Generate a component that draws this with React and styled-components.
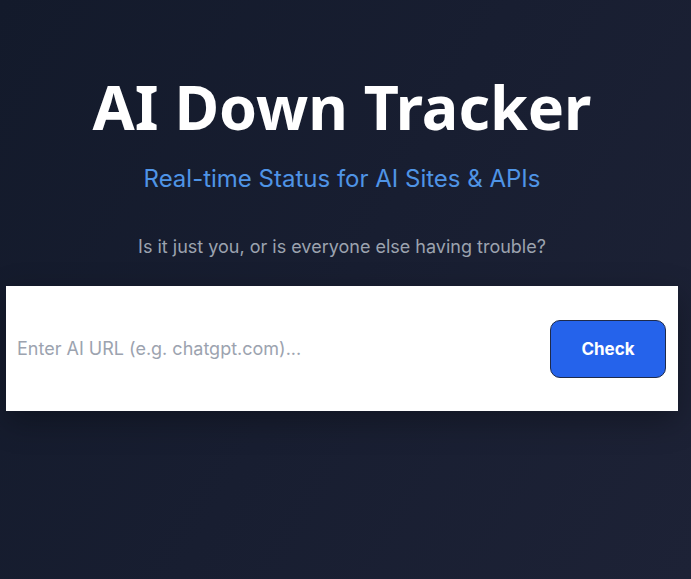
import React from 'react'
import styled, { createGlobalStyle } from 'styled-components'

const GlobalStyle = createGlobalStyle`
  html, body {
    margin: 0;
    padding: 0;
  }
  body {
    min-height: 100vh;
    background: linear-gradient(120deg, #131a2b 0%, #181e31 50%, #1d2236 100%);
    font-family: Inter, "Noto Sans", sans-serif;
  }
`

const Page = styled.main`
  min-height: 100vh;
  display: flex;
  flex-direction: column;
  align-items: center;
  padding: 70px 13px 0 6px;
  box-sizing: border-box;
`

const Title = styled.h1`
  margin: 0;
  font-family: "Noto Sans", sans-serif;
  font-weight: 700;
  font-size: 61px;
  line-height: 74px;
  color: #ffffff;
`

const Subtitle = styled.h2`
  margin: 19px 0 0;
  font-family: Inter, sans-serif;
  font-weight: 400;
  font-size: 24px;
  line-height: 32px;
  color: #4f94e6;
`

const Tagline = styled.p`
  margin: 39px 0 0;
  font-size: 18px;
  line-height: 26px;
  color: #9ca3af;
`

const SearchBox = styled.form`
  align-self: stretch;
  margin-top: 26px;
  height: 125px;
  box-sizing: border-box;
  background: #ffffff;
  display: flex;
  align-items: center;
  padding: 0 12px 0 9px;
  box-shadow: 0 10px 30px rgba(0, 0, 0, 0.3);
`

const UrlInput = styled.input`
  flex: 1;
  border: none;
  outline: none;
  background: transparent;
  font-family: Inter, sans-serif;
  font-size: 18px;
  color: #111827;
  &::placeholder {
    color: #9ca3af;
  }
`

const CheckButton = styled.button`
  width: 116px;
  height: 58px;
  border-radius: 10px;
  border: 1px solid #1e2a4a;
  background: #2563eb;
  color: #ffffff;
  font-family: Inter, sans-serif;
  font-weight: 700;
  font-size: 17px;
  cursor: pointer;
`

export default function App() {
  return (
    <>
      <GlobalStyle />
      <Page>
        <Title>AI Down Tracker</Title>
        <Subtitle>Real-time Status for AI Sites &amp; APIs</Subtitle>
        <Tagline>Is it just you, or is everyone else having trouble?</Tagline>
        <SearchBox onSubmit={(e) => e.preventDefault()}>
          <UrlInput type="text" placeholder="Enter AI URL (e.g. chatgpt.com)..." />
          <CheckButton type="submit">Check</CheckButton>
        </SearchBox>
      </Page>
    </>
  )
}
